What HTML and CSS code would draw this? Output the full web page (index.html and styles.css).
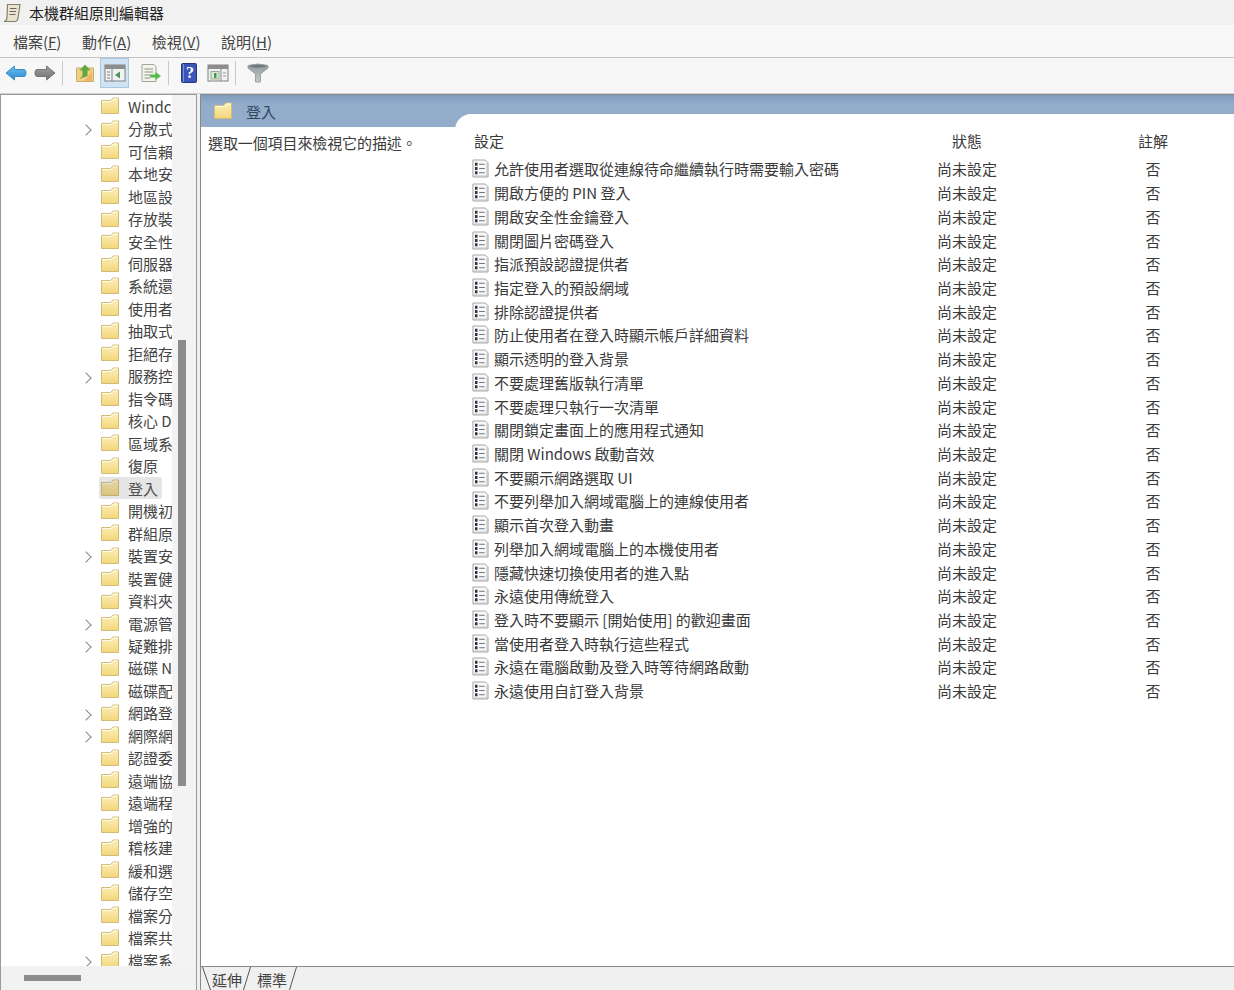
FILE: index.html
```html
<!DOCTYPE html>
<html lang="zh-Hant">
<head>
<meta charset="UTF-8" />
<title>本機群組原則編輯器</title>
<link rel="stylesheet" href="styles.css">
</head>
<body>

<svg class="defs" width="0" height="0">
  <defs>
    <linearGradient id="folderFill" x1="0" y1="0" x2="0" y2="1">
      <stop offset="0" stop-color="#fbf0b8" />
      <stop offset="1" stop-color="#f3d67c" />
    </linearGradient>
    <linearGradient id="backFill" x1="0" y1="0" x2="0" y2="1">
      <stop offset="0" stop-color="#6cc4ef" />
      <stop offset="1" stop-color="#2a86d0" />
    </linearGradient>
    <linearGradient id="forwardFill" x1="0" y1="0" x2="0" y2="1">
      <stop offset="0" stop-color="#a2a2a2" />
      <stop offset="1" stop-color="#707070" />
    </linearGradient>
    <linearGradient id="filterFill" x1="0" y1="0" x2="0" y2="1">
      <stop offset="0" stop-color="#8f989c" />
      <stop offset="1" stop-color="#c4c8ca" />
    </linearGradient>
    <symbol id="folder" viewBox="0 0 20 18">
      <path d="M1.5 3.5 L1.5 16.5 L18.5 16.5 L18.5 1 L13 1 L10.5 3.5 Z" fill="url(#folderFill)" stroke="#d3bb78" stroke-width="1" />
      <path d="M2.5 4.5 L11 4.5 L13.5 2 L17.5 2" fill="none" stroke="#fffdf0" stroke-width="1" />
    </symbol>
    <symbol id="setting" viewBox="0 0 18 20">
      <path d="M1 1 H14 L17 4 V19 H1 Z" fill="#f8f8f8" stroke="#a0a0a0" stroke-width="1" />
      <path d="M2 18 H16 M16 4.5 V18" stroke="#c4c4c4" stroke-width="1.4" />
      <path d="M4.5 4 V7 M4.5 8.5 V11.5 M4.5 13 V16" stroke="#2a3040" stroke-width="2.6" />
      <path d="M7.5 5.5 H13.5 M7.5 10 H13.5 M7.5 14.5 H13.5" stroke="#6f7680" stroke-width="1.2" />
    </symbol>
  </defs>
</svg>

<div class="titlebar">
  <svg class="app-icon" viewBox="0 0 18 20" width="18" height="20">
    <path d="M4.5 1.5 H17 L15 15 Q14.5 18.5 11.5 18.5 H1 Q3.5 18 4 15 Z" fill="#e9e3cf" stroke="#86806e" stroke-width="1.2" />
    <path d="M7 5.5 H13.5 M6.5 8.5 H13 M6.5 11.5 H12.5" stroke="#6f6a5c" stroke-width="1.2" />
  </svg>
  <span>本機群組原則編輯器</span>
</div>

<nav class="menubar">
  <span>檔案(<u>F</u>)</span>
  <span>動作(<u>A</u>)</span>
  <span>檢視(<u>V</u>)</span>
  <span>說明(<u>H</u>)</span>
</nav>

<div class="toolbar">
  <svg class="tool tool-back" viewBox="0 0 22 18" width="22" height="18">
    <path d="M1 9 L9.5 2 V5.5 H19 Q21 5.5 21 9 Q21 12.5 19 12.5 H9.5 V16 Z" fill="url(#backFill)" stroke="#3f8cc6" stroke-width="1" />
  </svg>
  <svg class="tool tool-forward" viewBox="0 0 22 18" width="22" height="18">
    <path d="M21 9 L12.5 2 V5.5 H3 Q1 5.5 1 9 Q1 12.5 3 12.5 H12.5 V16 Z" fill="url(#forwardFill)" stroke="#757575" stroke-width="1" />
  </svg>
  <i class="sep sep-a"></i>
  <svg class="tool tool-up" viewBox="0 0 20 20" width="20" height="20">
    <path d="M1.5 5 H18.5 V18.5 H1.5 Z" fill="#f2cf7c" stroke="#c6b06c" stroke-width="1" />
    <path d="M9 18 L17 9 V18 Z" fill="#eeb26c" />
    <path d="M10 1.5 L15.5 7.5 H12.5 V13 L4 16 L7.5 13 V7.5 H4.5 Z" fill="#5fa83e" />
  </svg>
  <div class="tool-active">
    <svg viewBox="0 0 22 20" width="22" height="20">
      <rect x="1" y="2" width="20" height="16" fill="#f1f3f2" stroke="#808080" />
      <rect x="1" y="2" width="20" height="4" fill="#8d8d8d" />
      <path d="M8 6 V18" stroke="#808080" />
      <path d="M3 9 H6 M3 12 H6 M3 15 H6" stroke="#7f7f7f" />
      <path d="M16 8.5 L11 12 L16 15.5 Z" fill="#3f9a54" />
    </svg>
  </div>
  <svg class="tool tool-export" viewBox="0 0 22 20" width="22" height="20">
    <path d="M2 1.5 H14 L16 3.5 V18.5 H2 Z" fill="#f3f4ea" stroke="#a3a59a" />
    <path d="M4.5 6 H13 M4.5 9 H13 M4.5 12 H10 M4.5 15 H10" stroke="#8d8f84" />
    <path d="M10 11.5 H15.5 V9 L21 13 L15.5 17 V14.5 H10 Z" fill="#58b94f" />
  </svg>
  <i class="sep sep-b"></i>
  <svg class="tool tool-help" viewBox="0 0 18 22" width="18" height="22">
    <rect x="1.5" y="1.5" width="15" height="19" rx="1" fill="#3b55b8" stroke="#24367e" />
    <path d="M3.5 2 V20" stroke="#7a92d4" />
    <text x="10" y="16" class="help-mark">?</text>
  </svg>
  <svg class="tool tool-view" viewBox="0 0 22 20" width="22" height="20">
    <rect x="1" y="2" width="20" height="16" fill="#f1f3f2" stroke="#808080" />
    <rect x="1" y="2" width="20" height="4" fill="#8d8d8d" />
    <path d="M14 6 V18" stroke="#888" />
    <path d="M16 10 H19 M16 13 H19" stroke="#999" />
    <rect x="4" y="8.5" width="8" height="7.5" fill="#dfeadb" stroke="#9aa897" />
    <rect x="7" y="10" width="2.5" height="5" fill="#3f9a54" />
  </svg>
  <i class="sep sep-c"></i>
  <svg class="tool tool-filter" viewBox="0 0 22 20" width="22" height="20">
    <path d="M1 2.5 Q11 -0.5 21 2.5 L21 5 L13.5 11 V19 H8.5 V11 L1 5 Z" fill="url(#filterFill)" stroke="#9aa0a2" />
    <ellipse cx="11" cy="3.2" rx="8.5" ry="1.5" fill="#70797d" />
  </svg>
</div>

<main class="panes">
  <aside class="tree">
    <ul class="tree-list">
      <li><svg class="folder"><use href="#folder" /></svg><span>Windc</span></li>
      <li class="has-kids"><svg class="folder"><use href="#folder" /></svg><span>分散式</span></li>
      <li><svg class="folder"><use href="#folder" /></svg><span>可信賴</span></li>
      <li><svg class="folder"><use href="#folder" /></svg><span>本地安</span></li>
      <li><svg class="folder"><use href="#folder" /></svg><span>地區設</span></li>
      <li><svg class="folder"><use href="#folder" /></svg><span>存放裝</span></li>
      <li><svg class="folder"><use href="#folder" /></svg><span>安全性</span></li>
      <li><svg class="folder"><use href="#folder" /></svg><span>伺服器</span></li>
      <li><svg class="folder"><use href="#folder" /></svg><span>系統還</span></li>
      <li><svg class="folder"><use href="#folder" /></svg><span>使用者</span></li>
      <li><svg class="folder"><use href="#folder" /></svg><span>抽取式</span></li>
      <li><svg class="folder"><use href="#folder" /></svg><span>拒絕存</span></li>
      <li class="has-kids"><svg class="folder"><use href="#folder" /></svg><span>服務控</span></li>
      <li><svg class="folder"><use href="#folder" /></svg><span>指令碼</span></li>
      <li><svg class="folder"><use href="#folder" /></svg><span>核心 D</span></li>
      <li><svg class="folder"><use href="#folder" /></svg><span>區域系</span></li>
      <li><svg class="folder"><use href="#folder" /></svg><span>復原</span></li>
      <li class="selected"><svg class="folder"><use href="#folder" /></svg><span>登入</span></li>
      <li><svg class="folder"><use href="#folder" /></svg><span>開機初</span></li>
      <li><svg class="folder"><use href="#folder" /></svg><span>群組原</span></li>
      <li class="has-kids"><svg class="folder"><use href="#folder" /></svg><span>裝置安</span></li>
      <li><svg class="folder"><use href="#folder" /></svg><span>裝置健</span></li>
      <li><svg class="folder"><use href="#folder" /></svg><span>資料夾</span></li>
      <li class="has-kids"><svg class="folder"><use href="#folder" /></svg><span>電源管</span></li>
      <li class="has-kids"><svg class="folder"><use href="#folder" /></svg><span>疑難排</span></li>
      <li><svg class="folder"><use href="#folder" /></svg><span>磁碟 N</span></li>
      <li><svg class="folder"><use href="#folder" /></svg><span>磁碟配</span></li>
      <li class="has-kids"><svg class="folder"><use href="#folder" /></svg><span>網路登</span></li>
      <li class="has-kids"><svg class="folder"><use href="#folder" /></svg><span>網際網</span></li>
      <li><svg class="folder"><use href="#folder" /></svg><span>認證委</span></li>
      <li><svg class="folder"><use href="#folder" /></svg><span>遠端協</span></li>
      <li><svg class="folder"><use href="#folder" /></svg><span>遠端程</span></li>
      <li><svg class="folder"><use href="#folder" /></svg><span>增強的</span></li>
      <li><svg class="folder"><use href="#folder" /></svg><span>稽核建</span></li>
      <li><svg class="folder"><use href="#folder" /></svg><span>緩和選</span></li>
      <li><svg class="folder"><use href="#folder" /></svg><span>儲存空</span></li>
      <li><svg class="folder"><use href="#folder" /></svg><span>檔案分</span></li>
      <li><svg class="folder"><use href="#folder" /></svg><span>檔案共</span></li>
      <li class="has-kids"><svg class="folder"><use href="#folder" /></svg><span>檔案系</span></li>
    </ul>
    <div class="vscroll"></div>
    <div class="hscroll"><i></i></div>
  </aside>

  <section class="detail">
    <div class="detail-body">
      <div class="desc">
        <div class="detail-head">
          <svg class="folder"><use href="#folder" /></svg>
          <span>登入</span>
        </div>
        <p>選取一個項目來檢視它的描述。</p>
      </div>
      <div class="list-wrap">
        <div class="list">
          <div class="row row-head"><span class="name-head">設定</span><span class="mid">狀態</span><span class="mid">註解</span></div>
          <div class="row"><span class="name"><svg class="setting"><use href="#setting" /></svg>允許使用者選取從連線待命繼續執行時需要輸入密碼</span><span class="mid">尚未設定</span><span class="mid">否</span></div>
          <div class="row"><span class="name"><svg class="setting"><use href="#setting" /></svg>開啟方便的 PIN 登入</span><span class="mid">尚未設定</span><span class="mid">否</span></div>
          <div class="row"><span class="name"><svg class="setting"><use href="#setting" /></svg>開啟安全性金鑰登入</span><span class="mid">尚未設定</span><span class="mid">否</span></div>
          <div class="row"><span class="name"><svg class="setting"><use href="#setting" /></svg>關閉圖片密碼登入</span><span class="mid">尚未設定</span><span class="mid">否</span></div>
          <div class="row"><span class="name"><svg class="setting"><use href="#setting" /></svg>指派預設認證提供者</span><span class="mid">尚未設定</span><span class="mid">否</span></div>
          <div class="row"><span class="name"><svg class="setting"><use href="#setting" /></svg>指定登入的預設網域</span><span class="mid">尚未設定</span><span class="mid">否</span></div>
          <div class="row"><span class="name"><svg class="setting"><use href="#setting" /></svg>排除認證提供者</span><span class="mid">尚未設定</span><span class="mid">否</span></div>
          <div class="row"><span class="name"><svg class="setting"><use href="#setting" /></svg>防止使用者在登入時顯示帳戶詳細資料</span><span class="mid">尚未設定</span><span class="mid">否</span></div>
          <div class="row"><span class="name"><svg class="setting"><use href="#setting" /></svg>顯示透明的登入背景</span><span class="mid">尚未設定</span><span class="mid">否</span></div>
          <div class="row"><span class="name"><svg class="setting"><use href="#setting" /></svg>不要處理舊版執行清單</span><span class="mid">尚未設定</span><span class="mid">否</span></div>
          <div class="row"><span class="name"><svg class="setting"><use href="#setting" /></svg>不要處理只執行一次清單</span><span class="mid">尚未設定</span><span class="mid">否</span></div>
          <div class="row"><span class="name"><svg class="setting"><use href="#setting" /></svg>關閉鎖定畫面上的應用程式通知</span><span class="mid">尚未設定</span><span class="mid">否</span></div>
          <div class="row"><span class="name"><svg class="setting"><use href="#setting" /></svg>關閉 Windows 啟動音效</span><span class="mid">尚未設定</span><span class="mid">否</span></div>
          <div class="row"><span class="name"><svg class="setting"><use href="#setting" /></svg>不要顯示網路選取 UI</span><span class="mid">尚未設定</span><span class="mid">否</span></div>
          <div class="row"><span class="name"><svg class="setting"><use href="#setting" /></svg>不要列舉加入網域電腦上的連線使用者</span><span class="mid">尚未設定</span><span class="mid">否</span></div>
          <div class="row"><span class="name"><svg class="setting"><use href="#setting" /></svg>顯示首次登入動畫</span><span class="mid">尚未設定</span><span class="mid">否</span></div>
          <div class="row"><span class="name"><svg class="setting"><use href="#setting" /></svg>列舉加入網域電腦上的本機使用者</span><span class="mid">尚未設定</span><span class="mid">否</span></div>
          <div class="row"><span class="name"><svg class="setting"><use href="#setting" /></svg>隱藏快速切換使用者的進入點</span><span class="mid">尚未設定</span><span class="mid">否</span></div>
          <div class="row"><span class="name"><svg class="setting"><use href="#setting" /></svg>永遠使用傳統登入</span><span class="mid">尚未設定</span><span class="mid">否</span></div>
          <div class="row"><span class="name"><svg class="setting"><use href="#setting" /></svg>登入時不要顯示 [開始使用] 的歡迎畫面</span><span class="mid">尚未設定</span><span class="mid">否</span></div>
          <div class="row"><span class="name"><svg class="setting"><use href="#setting" /></svg>當使用者登入時執行這些程式</span><span class="mid">尚未設定</span><span class="mid">否</span></div>
          <div class="row"><span class="name"><svg class="setting"><use href="#setting" /></svg>永遠在電腦啟動及登入時等待網路啟動</span><span class="mid">尚未設定</span><span class="mid">否</span></div>
          <div class="row"><span class="name"><svg class="setting"><use href="#setting" /></svg>永遠使用自訂登入背景</span><span class="mid">尚未設定</span><span class="mid">否</span></div>
        </div>
      </div>
    </div>
    <div class="tabs">
      <svg class="slash" viewBox="0 0 9 23" width="9" height="23"><path d="M0.5 0 L8.5 23" /></svg>
      <span class="tab">延伸</span>
      <svg class="slash slash-on" viewBox="0 0 9 23" width="9" height="23"><path d="M7.5 0 L0.5 23" /></svg>
      <span class="tab tab-off">標準</span>
      <svg class="slash" viewBox="0 0 9 23" width="9" height="23"><path d="M7.5 0 L0.5 23" /></svg>
    </div>
  </section>
</main>

</body>
</html>
```

FILE: styles.css
```css
* {
  box-sizing: border-box;
}
html, body {
  margin: 0;
  height: 100%;
}
body {
  width: 1234px;
  height: 990px;
  overflow: hidden;
  display: flex;
  flex-direction: column;
  background: #f0f0f0;
  color: #3a3a3a;
  font-family: "Noto Sans CJK TC", "Liberation Sans", sans-serif;
  font-size: 15px;
}
.defs {
  position: absolute;
}

/* title + menu */
.titlebar {
  height: 25px;
  flex: none;
  display: flex;
  align-items: center;
  gap: 8px;
  padding-left: 3px;
  background: #f1f1f1;
  color: #222;
}
.menubar {
  height: 33px;
  flex: none;
  display: flex;
  align-items: center;
  gap: 20.5px;
  padding-left: 13px;
  background: #f8f8f8;
  border-bottom: 1px solid #c4c4c4;
  color: #444;
}

/* toolbar */
.toolbar {
  height: 35px;
  flex: none;
  display: flex;
  align-items: center;
  padding: 0 0 5px 5px;
  background: #f7f7f7;
}
.tool {
  flex: none;
}
.tool-forward {
  margin-left: 7px;
}
.tool-up {
  margin-left: 12px;
}
.tool-active {
  width: 29px;
  height: 30px;
  margin-left: 5px;
  display: flex;
  align-items: center;
  justify-content: center;
  background: #cfe3f5;
  border: 1px solid #a9c8e4;
}
.tool-export {
  margin-left: 11px;
}
.tool-help {
  margin-left: 11px;
}
.tool-view {
  margin-left: 9px;
}
.tool-filter {
  margin-left: 11px;
}
.sep {
  width: 1px;
  height: 24px;
  flex: none;
  background: #c9c9c9;
}
.sep-a {
  margin-left: 6px;
}
.sep-b {
  margin-left: 6px;
}
.sep-c {
  margin-left: 6px;
}
.help-mark {
  font-family: "Liberation Serif", serif;
  font-size: 16px;
  font-weight: bold;
  fill: #fff;
  text-anchor: middle;
}

/* panes */
.panes {
  flex: 1;
  min-height: 0;
  display: flex;
  gap: 3px;
  border-top: 1px solid #d0d0d0;
}
.tree {
  position: relative;
  width: 197px;
  flex: none;
  overflow: hidden;
  background: #f3f3f3;
  border: 1px solid #9a9a9a;
  border-bottom: 0;
}
.tree-list {
  list-style: none;
  margin: 0;
  padding: 0;
  width: 171px;
  height: 100%;
  overflow: hidden;
  background: #fff;
}
.tree-list li {
  position: relative;
  height: 22.47px;
  display: flex;
  align-items: center;
  padding-left: 99px;
  gap: 8px;
  white-space: nowrap;
  color: #444;
}
.tree-list li span {
  overflow: hidden;
}
.tree-list li.has-kids::before {
  content: "";
  position: absolute;
  left: 81px;
  top: 9px;
  width: 7px;
  height: 7px;
  border-top: 1px solid #888;
  border-right: 1px solid #888;
  transform: rotate(45deg);
}
.tree-list li.selected::after {
  content: "";
  position: absolute;
  left: 98px;
  top: 0;
  width: 63px;
  height: 22px;
  background: #7f7f7f;
  opacity: 0.2;
  border-radius: 2px;
}
.folder {
  width: 20px;
  height: 18px;
  flex: none;
}
.vscroll {
  position: absolute;
  left: 177px;
  top: 245px;
  width: 8px;
  height: 446px;
  background: #8c8c8c;
}
.hscroll {
  position: absolute;
  left: 0;
  right: 0;
  bottom: 0;
  height: 24px;
  padding: 9px 0 0 23px;
  background: #f2f2f2;
}
.hscroll i {
  display: block;
  width: 57px;
  height: 6px;
  background: #8c8c8c;
}

/* right side */
.detail {
  flex: 1;
  min-width: 0;
  display: flex;
  flex-direction: column;
  background: #fff;
  border-left: 1px solid #8a8a8a;
}
.detail-body {
  flex: 1;
  min-height: 0;
  display: flex;
  border-top: 1px solid #8a8a8a;
  border-bottom: 1px solid #8a8a8a;
}
.desc {
  width: 254px;
  flex: none;
}
.detail-head {
  height: 32px;
  display: flex;
  align-items: center;
  gap: 13px;
  padding-left: 12px;
  background: linear-gradient(#7f9bbc, #92acca 9px);
  color: #33475f;
}
.desc p {
  margin: 0;
  padding: 5px 0 0 7px;
  letter-spacing: -0.1px;
}
.list-wrap {
  flex: 1;
  min-width: 0;
  background: linear-gradient(#7f9bbc, #92acca 9px, #92acca 32px, #fff 32px);
}
.list {
  margin-top: 19px;
  height: calc(100% - 19px);
  padding: 13px 0 0 17px;
  background: #fff;
  border-top-left-radius: 16px;
}
.row {
  display: grid;
  grid-template-columns: 465px 60px 126px 60px;
  align-items: center;
  height: 23.73px;
  white-space: nowrap;
}
.row .mid:last-child {
  grid-column: 4;
}
.row-head {
  height: 26px;
  margin-bottom: 4px;
}
.name-head {
  padding-left: 2px;
}
.name {
  display: flex;
  align-items: center;
  gap: 5px;
}
.mid {
  text-align: center;
}
.setting {
  width: 17px;
  height: 19px;
  flex: none;
}

/* bottom tabs */
.tabs {
  height: 23px;
  flex: none;
  display: flex;
  padding-left: 1px;
  background: #f0f0f0;
  color: #444;
}
.tab {
  width: 30px;
  margin: 0 1px;
  padding-top: 2px;
  line-height: 21px;
}
.tab-off {
  margin: 0 2px 0 5px;
}
.slash {
  flex: none;
  fill: none;
  stroke: #555;
  stroke-width: 1;
}
```
